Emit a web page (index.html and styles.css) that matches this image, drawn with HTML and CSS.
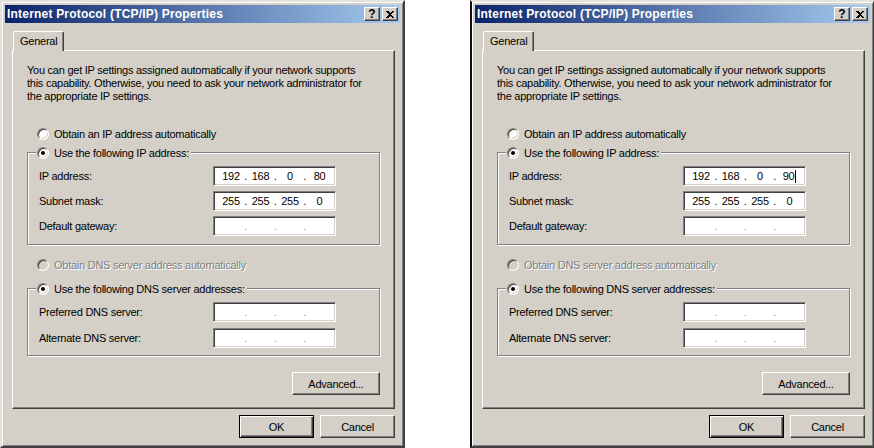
FILE: index.html
```html
<!DOCTYPE html>
<html lang="en">
<head>
    <meta charset="UTF-8">
    <meta name="viewport" content="width=device-width, initial-scale=1.0">
    <title>Internet Protocol (TCP/IP) Properties</title>
    <link rel="stylesheet" href="styles.css">
</head>
<body>
    <div class="screen">
        <!-- first dialog: 192.168.0.80 -->
        <div class="dialog">
            <div class="titlebar">
                <span class="title">Internet Protocol (TCP/IP) Properties</span>
                <div class="cap-btns">
                    <span class="cap-btn">?</span>
                    <span class="cap-btn"><svg width="8" height="7" viewBox="0 0 8 7" shape-rendering="crispEdges"><path d="M0 0h2l2 2 2-2h2L5 3.5 8 7H6L4 5 2 7H0l3-3.5z"/></svg></span>
                </div>
            </div>
            <div class="dlg-body">
                <div class="tabs"><span class="tab">General</span></div>
                <div class="panel">
                    <p class="intro">You can get IP settings assigned automatically if your network supports<br>this capability. Otherwise, you need to ask your network administrator for<br>the appropriate IP settings.</p>

                    <div class="option first"><span class="radio"></span>Obtain an IP address automatically</div>

                    <div class="group">
                        <div class="group-title"><span class="radio checked"></span>Use the following IP address:</div>
                        <div class="fields">
                            <span>IP address:</span>
                            <div class="ipbox"><span class="oct">192</span><span class="dot">.</span><span class="oct">168</span><span class="dot">.</span><span class="oct">0</span><span class="dot">.</span><span class="oct">80</span></div>
                            <span>Subnet mask:</span>
                            <div class="ipbox"><span class="oct">255</span><span class="dot">.</span><span class="oct">255</span><span class="dot">.</span><span class="oct">255</span><span class="dot">.</span><span class="oct">0</span></div>
                            <span>Default gateway:</span>
                            <div class="ipbox empty"><span class="oct"></span><span class="dot">.</span><span class="oct"></span><span class="dot">.</span><span class="oct"></span><span class="dot">.</span><span class="oct"></span></div>
                        </div>
                    </div>

                    <div class="option dns muted"><span class="radio disabled"></span>Obtain DNS server address automatically</div>

                    <div class="group dns">
                        <div class="group-title"><span class="radio checked"></span>Use the following DNS server addresses:</div>
                        <div class="fields wide-gap">
                            <span>Preferred DNS server:</span>
                            <div class="ipbox empty"><span class="oct"></span><span class="dot">.</span><span class="oct"></span><span class="dot">.</span><span class="oct"></span><span class="dot">.</span><span class="oct"></span></div>
                            <span>Alternate DNS server:</span>
                            <div class="ipbox empty"><span class="oct"></span><span class="dot">.</span><span class="oct"></span><span class="dot">.</span><span class="oct"></span><span class="dot">.</span><span class="oct"></span></div>
                        </div>
                    </div>

                    <div class="actions"><button class="btn btn-wide">Advanced...</button></div>
                </div>
                <div class="footer">
                    <button class="btn btn-default">OK</button>
                    <button class="btn">Cancel</button>
                </div>
            </div>
        </div>

        <!-- second dialog: 192.168.0.90, caret still in the last octet -->
        <div class="dialog dialog-right">
            <div class="titlebar">
                <span class="title">Internet Protocol (TCP/IP) Properties</span>
                <div class="cap-btns">
                    <span class="cap-btn">?</span>
                    <span class="cap-btn"><svg width="8" height="7" viewBox="0 0 8 7" shape-rendering="crispEdges"><path d="M0 0h2l2 2 2-2h2L5 3.5 8 7H6L4 5 2 7H0l3-3.5z"/></svg></span>
                </div>
            </div>
            <div class="dlg-body">
                <div class="tabs"><span class="tab">General</span></div>
                <div class="panel">
                    <p class="intro">You can get IP settings assigned automatically if your network supports<br>this capability. Otherwise, you need to ask your network administrator for<br>the appropriate IP settings.</p>

                    <div class="option first"><span class="radio"></span>Obtain an IP address automatically</div>

                    <div class="group">
                        <div class="group-title"><span class="radio checked"></span>Use the following IP address:</div>
                        <div class="fields">
                            <span>IP address:</span>
                            <div class="ipbox"><span class="oct">192</span><span class="dot">.</span><span class="oct">168</span><span class="dot">.</span><span class="oct">0</span><span class="dot">.</span><span class="oct">90<span class="caret"></span></span></div>
                            <span>Subnet mask:</span>
                            <div class="ipbox"><span class="oct">255</span><span class="dot">.</span><span class="oct">255</span><span class="dot">.</span><span class="oct">255</span><span class="dot">.</span><span class="oct">0</span></div>
                            <span>Default gateway:</span>
                            <div class="ipbox empty"><span class="oct"></span><span class="dot">.</span><span class="oct"></span><span class="dot">.</span><span class="oct"></span><span class="dot">.</span><span class="oct"></span></div>
                        </div>
                    </div>

                    <div class="option dns muted"><span class="radio disabled"></span>Obtain DNS server address automatically</div>

                    <div class="group dns">
                        <div class="group-title"><span class="radio checked"></span>Use the following DNS server addresses:</div>
                        <div class="fields wide-gap">
                            <span>Preferred DNS server:</span>
                            <div class="ipbox empty"><span class="oct"></span><span class="dot">.</span><span class="oct"></span><span class="dot">.</span><span class="oct"></span><span class="dot">.</span><span class="oct"></span></div>
                            <span>Alternate DNS server:</span>
                            <div class="ipbox empty"><span class="oct"></span><span class="dot">.</span><span class="oct"></span><span class="dot">.</span><span class="oct"></span><span class="dot">.</span><span class="oct"></span></div>
                        </div>
                    </div>

                    <div class="actions"><button class="btn btn-wide">Advanced...</button></div>
                </div>
                <div class="footer">
                    <button class="btn btn-default">OK</button>
                    <button class="btn">Cancel</button>
                </div>
            </div>
        </div>
    </div>
</body>
</html>
```

FILE: styles.css
```css
body {
    margin: 0;
    background: #fff;
    font-family: "Liberation Sans", Arial, sans-serif;
    font-size: 11px;
    letter-spacing: -0.25px;
    color: #000;
}
.screen {
    display: flex;
    gap: 65px;
    width: 874px;
    height: 448px;
    overflow: hidden;
}
.dialog {
    flex: none;
    width: 405px;
    height: 448px;
    box-sizing: border-box;
    background: #d4d0c8;
    border: 2px solid;
    border-color: #e4e2dc #404040 #404040 #e4e2dc;
    box-shadow: inset 1px 1px #fff, inset -1px -1px #808080;
    padding: 3px 3px 0 3px;
}
.dialog-right {
    border-left-color: #111;
}
.titlebar {
    display: flex;
    align-items: center;
    height: 18px;
    padding: 0 2px;
    background: linear-gradient(to right, #0a246a, #a6caf0);
}
.title {
    flex: 1;
    color: #fff;
    font-weight: bold;
    font-size: 12px;
    letter-spacing: 0.2px;
    white-space: nowrap;
}
.cap-btns {
    display: flex;
    gap: 2px;
}
.cap-btn {
    display: flex;
    align-items: center;
    justify-content: center;
    width: 16px;
    height: 14px;
    box-sizing: border-box;
    background: #d4d0c8;
    border: 1px solid;
    border-color: #fff #404040 #404040 #fff;
    box-shadow: inset -1px -1px #808080;
    font-weight: bold;
    font-size: 12px;
    letter-spacing: 0;
    line-height: 1;
}
.dlg-body {
    padding: 8px 5px 0 7px;
}
.tabs {
    display: flex;
}
.tab {
    position: relative;
    z-index: 1;
    height: 20px;
    box-sizing: border-box;
    margin: 0 0 -1px 1px;
    padding: 0 6px 1px;
    line-height: 18px;
    background: #d4d0c8;
    border-top: 1px solid #fff;
    border-left: 1px solid #fff;
    border-right: 1px solid #404040;
    border-radius: 2px 2px 0 0;
    box-shadow: inset -1px 0 #808080;
}
.panel {
    height: 359px;
    box-sizing: border-box;
    border: 1px solid;
    border-color: #fff #404040 #404040 #fff;
    box-shadow: inset -1px -1px #808080;
    padding: 13px 14px 0 14px;
}
.intro {
    margin: 0;
    line-height: 13px;
    white-space: nowrap;
}
.option {
    display: flex;
    align-items: center;
    gap: 5px;
    height: 13px;
    padding-left: 10px;
    white-space: nowrap;
}
.option.first {
    margin-top: 24px;
}
.option.dns {
    margin-top: 13px;
}
.muted {
    color: #808080;
    text-shadow: 1px 1px #fff;
}
.radio {
    flex: none;
    display: grid;
    place-items: center;
    width: 12px;
    height: 12px;
    box-sizing: border-box;
    border-radius: 50%;
    background: #fff;
    border: 1px solid;
    border-color: #808080 #fff #fff #808080;
    box-shadow: inset 1px 1px #404040, inset -1px -1px #d4d0c8;
}
.radio.checked::after {
    content: "";
    width: 4px;
    height: 4px;
    border-radius: 50%;
    background: #000;
}
.radio.disabled {
    background: #d4d0c8;
}
.group {
    margin-top: 12px;
    padding: 0 11px 8px 11px;
    border: 1px solid #808080;
    box-shadow: inset 1px 1px #fff, 1px 1px #fff;
}
.group.dns {
    margin-top: 17px;
    padding-bottom: 7px;
}
.group-title {
    display: flex;
    align-items: center;
    gap: 5px;
    width: max-content;
    height: 13px;
    margin: -7px 0 0 -3px;
    padding: 0 2px 0 1px;
    background: #d4d0c8;
    white-space: nowrap;
}
.fields {
    display: grid;
    grid-template-columns: 174px 123px;
    align-items: center;
    row-gap: 5px;
    margin-top: 7px;
}
.fields.wide-gap {
    row-gap: 6px;
}
.ipbox {
    display: flex;
    align-items: center;
    height: 20px;
    box-sizing: border-box;
    padding-left: 6px;
    background: #fff;
    border: 1px solid;
    border-color: #808080 #fff #fff #808080;
    box-shadow: inset 1px 1px #404040, inset -1px -1px #d4d0c8;
}
.oct {
    width: 22px;
    text-align: center;
}
.dot {
    width: 7.5px;
    text-align: center;
}
.ipbox.empty .dot {
    color: #9a9a9a;
}
.caret {
    display: inline-block;
    width: 1px;
    height: 13px;
    margin-left: 1px;
    background: #000;
    vertical-align: -3px;
}
.actions {
    display: flex;
    justify-content: flex-end;
    margin-top: 16px;
}
.footer {
    display: flex;
    justify-content: flex-end;
    gap: 6px;
    margin-top: 6px;
}
.btn {
    width: 75px;
    height: 23px;
    box-sizing: border-box;
    padding: 0;
    background: #d4d0c8;
    border: 1px solid;
    border-color: #fff #404040 #404040 #fff;
    box-shadow: inset -1px -1px #808080;
    font-family: inherit;
    font-size: inherit;
    letter-spacing: inherit;
    color: #000;
}
.btn-wide {
    width: 88px;
}
.btn-default {
    border-color: #000;
    box-shadow: inset 1px 1px #fff, inset -1px -1px #404040, inset -2px -2px #808080;
}
```
